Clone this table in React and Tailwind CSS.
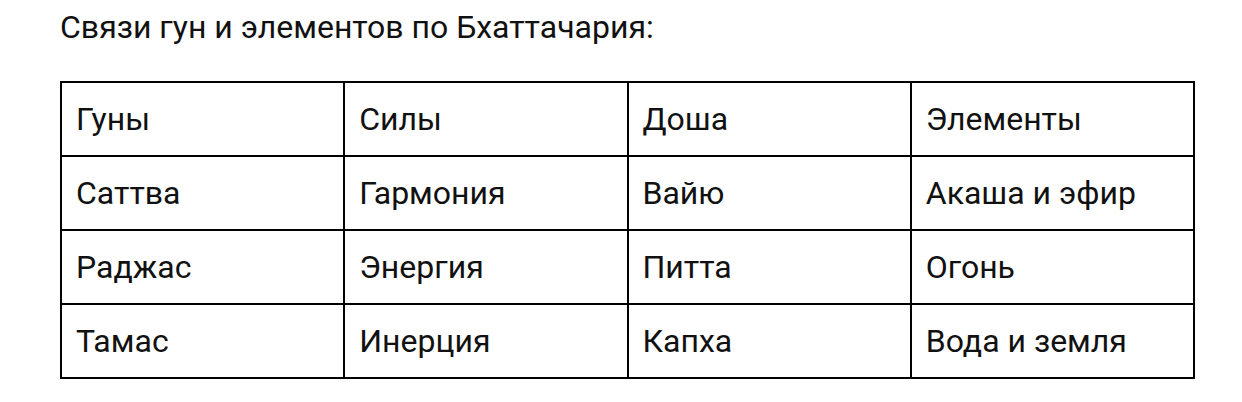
const rows = [
  ["Гуны", "Силы", "Доша", "Элементы"],
  ["Саттва", "Гармония", "Вайю", "Акаша и эфир"],
  ["Раджас", "Энергия", "Питта", "Огонь"],
  ["Тамас", "Инерция", "Капха", "Вода и земля"],
];

export default function App() {
  return (
    <div className="w-[1242px] h-[402px] bg-white text-[#111] pl-[60px] pt-[5px]" style={{ fontFamily: "Roboto, 'Noto Sans', sans-serif" }}>
      <p className="text-[32px] leading-[44px]">Связи гун и элементов по Бхаттачария:</p>
      <table className="mt-[32px] w-[1135px] table-fixed border-collapse border-2 border-black">
        <tbody>
          {rows.map((row, i) => (
            <tr key={i} className="h-[74px]">
              {row.map((cell, j) => (
                <td key={j} className="border-2 border-black px-[14px] text-[32px] leading-[42px] align-middle">
                  {cell}
                </td>
              ))}
            </tr>
          ))}
        </tbody>
      </table>
    </div>
  );
}
